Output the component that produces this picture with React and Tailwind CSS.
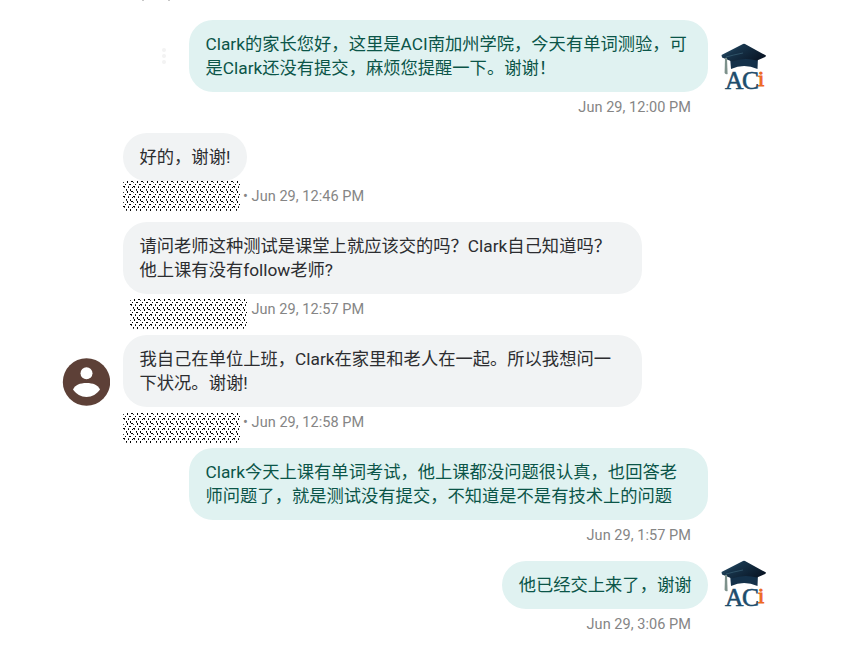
import { useId } from 'react'

const messages = [
  { from: 'school', time: 'Jun 29, 12:00 PM', lines: ['Clark的家长您好，这里是ACI南加州学院，今天有单词测验，可', '是Clark还没有提交，麻烦您提醒一下。谢谢！'], avatar: true, menu: true },
  { from: 'parent', time: 'Jun 29, 12:46 PM', lines: ['好的，谢谢!'], mask: '' },
  { from: 'parent', time: 'Jun 29, 12:57 PM', lines: ['请问老师这种测试是课堂上就应该交的吗？Clark自己知道吗？', '他上课有没有follow老师?'], shifted: true, mask: 'ml-[7px] pt-[5px]' },
  { from: 'parent', time: 'Jun 29, 12:58 PM', lines: ['我自己在单位上班，Clark在家里和老人在一起。所以我想问一', '下状况。谢谢!'], avatar: true, mask: 'pt-[6px]' },
  { from: 'school', time: 'Jun 29, 1:57 PM', lines: ['Clark今天上课有单词考试，他上课都没问题很认真，也回答老', '师问题了，就是测试没有提交，不知道是不是有技术上的问题'] },
  { from: 'school', time: 'Jun 29, 3:06 PM', lines: ['他已经交上来了，谢谢'], avatar: true },
]

function SchoolLogo() {
  const id = useId()
  return (
    <svg className="h-[48px] w-[46px] overflow-visible" viewBox="0 0 46 48">
      <defs>
        <linearGradient id={id} x1="0" y1="0" x2="1" y2="0.6">
          <stop offset="0" stopColor="#3b6a84" />
          <stop offset="0.4" stopColor="#17344b" />
          <stop offset="1" stopColor="#0a1727" />
        </linearGradient>
      </defs>
      <path d="M9 14 L37 14 L36.5 26 Q23 20 10 26 Z" fill="#14314a" />
      <path d="M0.5 12 L22 1 Q23 0.6 24 1 L45 12.5 Q45 14 43 14.5 L36 17.5 Q23 14 11 18.5 L1 14.5 Z" fill={`url(#${id})`} />
      <path d="M22 10 Q12 12 5 14 L5 22" fill="none" stroke="#3f6a7e" strokeWidth="0.6" />
      <path d="M4 15 L6 15 L6.6 31 Q5 32 3.6 30 Z" fill="#7d918b" />
      <text x="4" y="45.5" fill="#1d4c6c" stroke="#1d4c6c" strokeWidth="0.6" className="font-['Liberation_Serif',serif] text-[25.5px] leading-none tracking-[-1.5px]">
        AC<tspan dx="0.6" dy="-2.5" fill="#ed6824" stroke="#ed6824" strokeWidth="1" fontSize="22">i</tspan>
      </text>
    </svg>
  )
}

function ParentAvatar() {
  return (
    <svg className="size-12" viewBox="0 0 48 48">
      <circle cx="24.5" cy="24" r="23.7" fill="#5d4037" />
      <circle cx="24.5" cy="15.2" r="6" fill="#fff" />
      <path d="M11 31.5 C13 27 18 25 24.5 25 S36 27 38 31.5 C35 36 30 39 24.5 39 S14 36 11 31.5 Z" fill="#fff" />
    </svg>
  )
}

// speckled block that hides the sender's name
function HiddenName() {
  const id = useId()
  return (
    <svg className="h-[30px] w-[117px] shrink-0" shapeRendering="crispEdges">
      <pattern id={id} width="10" height="10" patternUnits="userSpaceOnUse">
        <path d="M4 0h1v2h-1z M8 0h2v1h-2z M2 3h1v1h-1z M6 3h2v1h-2z M0 5h2v1h-2z M5 6h1v1h-1z M9 6h1v1h-1z M3 8h1v1h-1z M7 8h1v2h-1z" fill="#000" />
        <path d="M1 6h1v1h-1z M5 5h1v1h-1z M0 1h1v1h-1z M3 9h1v1h-1z" fill="#444" />
      </pattern>
      <rect width="117" height="30" fill={`url(#${id})`} />
    </svg>
  )
}

function Message({ message }) {
  const mine = message.from === 'school'
  return (
    <div className="flex">
      <div className="flex w-[61px] shrink-0 items-center">
        {!mine && message.avatar && <div className="mb-[19px]"><ParentAvatar /></div>}
      </div>
      <div className={`flex w-[585px] flex-col ${mine ? 'items-end' : 'items-start'}`}>
        <div className="flex items-center">
          {message.menu && (
            <div className="mr-[23px] flex flex-col gap-[2px]">
              <i className="size-1 rounded-full bg-[#f3f3f3]" />
              <i className="size-1 rounded-full bg-[#f3f3f3]" />
              <i className="size-1 rounded-full bg-[#f3f3f3]" />
            </div>
          )}
          <div className={`rounded-[24px] px-[16.5px] py-3 text-[17.3px] leading-6 whitespace-nowrap ${message.lines.length > 1 ? 'w-[519px]' : ''} ${mine ? 'bg-[#e0f2f1] text-[#0b5548]' : 'bg-[#f1f3f4] text-[#2c2d30]'}`}>
            {message.lines.map((line) => <p key={line}>{line}</p>)}
          </div>
        </div>
        {mine ? (
          <div className="h-[41px] pt-[6px] pr-[17px] text-[14.5px] leading-5 tracking-[0.05px] text-[#858585]">{message.time}</div>
        ) : (
          <div className="flex h-[41px] text-[14.5px] leading-5 tracking-[0.05px] text-[#858585]">
            <div className={message.mask}><HiddenName /></div>
            <span className={`pt-[6px] ${message.shifted ? 'ml-[4.5px]' : 'ml-[3px]'}`}>{message.shifted ? message.time : `• ${message.time}`}</span>
          </div>
        )}
      </div>
      <div className={`ml-[13px] flex ${message.menu ? 'items-end pb-[46px]' : 'items-center pb-[43px]'}`}>
        {mine && message.avatar && (
          <div className="-my-1"><SchoolLogo /></div>
        )}
      </div>
    </div>
  )
}

export default function App() {
  return (
    <main className="h-[650px] w-[847px] overflow-hidden bg-white font-[Roboto,'Noto_Sans_CJK_SC',sans-serif]">
      <div className="flex h-5 gap-6 pl-[142px]">
        <i className="h-px w-[2px] bg-[#c8c8c8]" />
        <i className="h-px w-[2px] bg-[#c8c8c8]" />
      </div>
      <div className="flex flex-col pl-[62px]">
        {messages.map((message) => <Message key={message.time} message={message} />)}
      </div>
    </main>
  )
}
